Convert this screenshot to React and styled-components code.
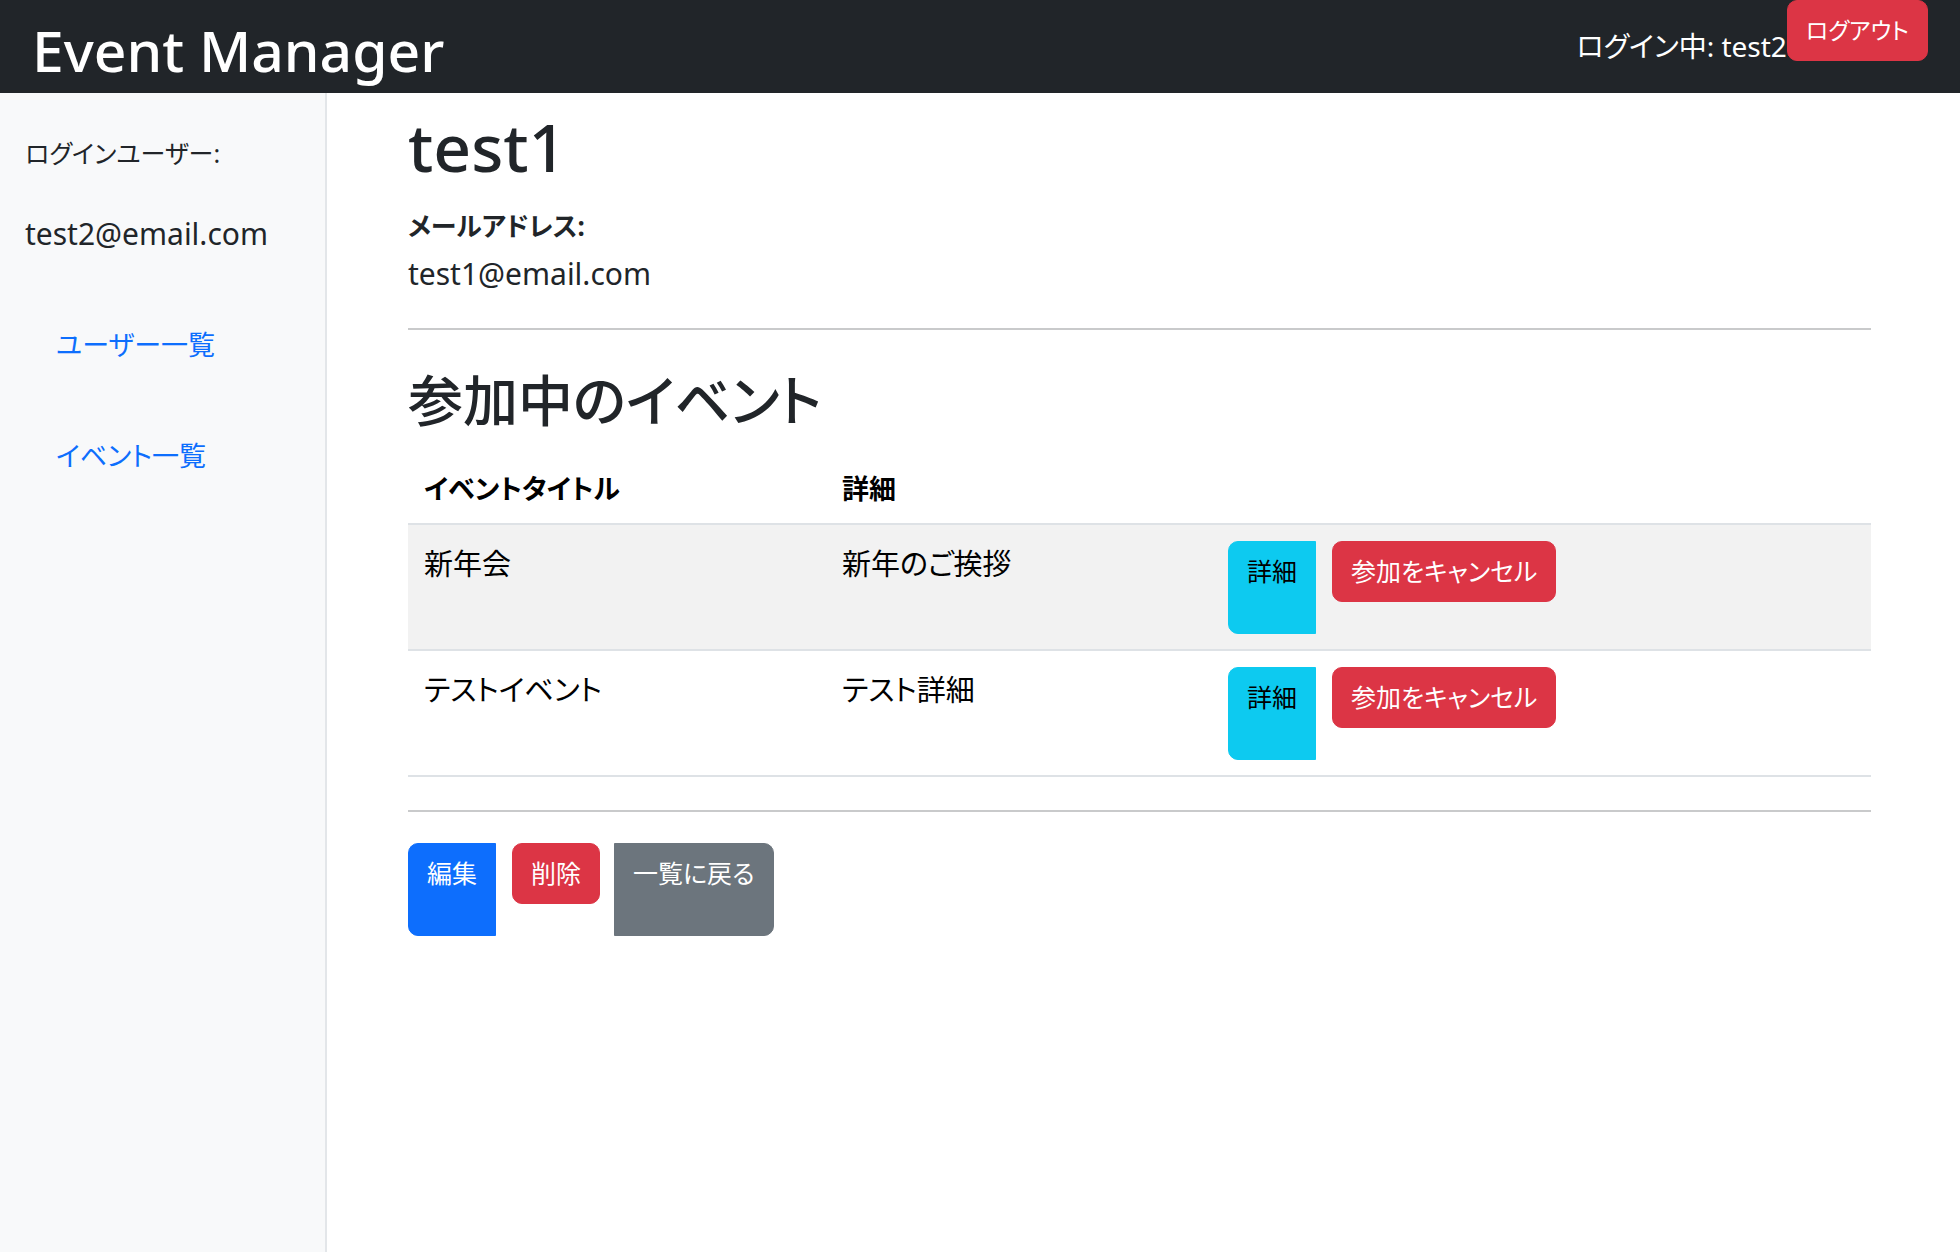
import React from 'react';
import styled, {createGlobalStyle, css} from 'styled-components';

const GlobalStyle = createGlobalStyle`
    html, body {
        margin: 0;
        padding: 0;
    }

    body {
        font-family: "Noto Sans", "Noto Sans CJK JP", sans-serif;
        font-feature-settings: "palt";
        color: #212529;
        background: #fff;
    }

    * {
        box-sizing: border-box;
    }
`

const Page = styled.div`
    min-height: 100vh;
    display: flex;
    flex-direction: column;
`

const Navbar = styled.header`
    height: 93px;
    flex-shrink: 0;
    display: flex;
    align-items: center;
    justify-content: space-between;
    padding: 0 32px 0 32px;
    background: #212529;
`

const Brand = styled.a`
    margin-top: 6px;
    color: #fff;
    font-size: 57px;
    font-weight: 500;
    line-height: 70px;
    text-decoration: none;
`

const UserBox = styled.div`
    display: flex;
    align-items: center;
`

const UserName = styled.span`
    color: #fff;
    font-size: 28px;
    line-height: 43px;
`

const InlineForm = styled.form`
    display: flex;
    margin: 0 ${p => p.$mr || 0}px 32px ${p => p.$ml || 0}px;
`

const btnBase = css`
    display: inline-block;
    padding: 10px 18px;
    border: 1px solid;
    border-radius: 10px;
    font-family: inherit;
    font-feature-settings: "palt";
    font-size: ${p => p.$size || 25}px;
    line-height: 39px;
    white-space: nowrap;
    text-decoration: none;
    cursor: pointer;
`

const variants = {
    danger: css`background: #dc3545; border-color: #dc3545; color: #fff;`,
    info: css`background: #0dcaf0; border-color: #0dcaf0; color: #000;`,
    primary: css`background: #0d6efd; border-color: #0d6efd; color: #fff;`,
    secondary: css`background: #6c757d; border-color: #6c757d; color: #fff;`,
}

const edges = {
    first: css`border-radius: 10px 0 0 10px;`,
    last: css`border-radius: 0 10px 10px 0;`,
}

const Button = styled.button`
    ${btnBase};
    ${p => variants[p.$variant || 'danger']};
`

const LinkButton = styled.a`
    ${btnBase};
    ${p => variants[p.$variant]};
    ${p => p.$edge && edges[p.$edge]};
`

const BtnGroup = styled.div`
    display: inline-flex;
    align-items: stretch;
`

const Body = styled.div`
    flex: 1;
    display: flex;
`

const Sidebar = styled.aside`
    width: 327px;
    flex-shrink: 0;
    padding: 41px 25px;
    background: #f8f9fa;
    border-right: 2px solid #e3e6e9;
`

const SideLabel = styled.p`
    margin: 0;
    font-size: 25px;
    line-height: 38px;
`

const SideEmail = styled.p`
    margin: 43px 0 0;
    font-size: 30px;
    line-height: 38px;
`

const NavList = styled.nav`
    display: flex;
    flex-direction: column;
    gap: 49px;
    margin-top: 61px;
`

const NavLink = styled.a`
    display: block;
    padding: 12px 31px;
    color: #0d6efd;
    font-size: 27px;
    line-height: 38px;
    text-decoration: none;
`

const Main = styled.main`
    flex: 1;
    padding: 0 89px 40px 81px;
`

const Title = styled.h1`
    margin: 14px 0 0;
    font-size: 66px;
    font-weight: 500;
    line-height: 79px;
`

const FieldLabel = styled.div`
    margin-top: 21px;
    font-size: 26px;
    font-weight: 700;
    line-height: 38px;
`

const FieldValue = styled.div`
    margin-top: 10px;
    font-size: 30px;
    line-height: 38px;
`

const Rule = styled.hr`
    margin: ${p => p.$top}px 0 0;
    border: 0;
    border-top: 2px solid #c9cacb;
`

const Heading = styled.h2`
    margin: 36px 0 0;
    font-size: 55px;
    font-weight: 500;
    line-height: 67px;
`

const Table = styled.table`
    width: 100%;
    margin-top: 21px;
    border-collapse: collapse;
    table-layout: fixed;
    color: #000;
`

const Th = styled.th`
    width: ${p => p.$w ? `${p.$w}px` : 'auto'};
    padding: 16px 16px 15px;
    border-bottom: 2px solid #dee2e6;
    font-size: 27px;
    font-weight: 700;
    line-height: 38px;
    text-align: left;
`

const Tr = styled.tr`
    background: ${p => p.$striped ? '#f2f2f2' : '#fff'};
`

const Td = styled.td`
    padding: 16px 16px 15px;
    border-bottom: 2px solid #dee2e6;
    font-size: 29px;
    line-height: 45px;
    vertical-align: top;
`

const Actions = styled.div`
    margin-top: 31px;
`

const events = [
    {id: 1, title: '新年会', detail: '新年のご挨拶'},
    {id: 2, title: 'テストイベント', detail: 'テスト詳細'},
]

const App = () => {
    return (
        <>
            <GlobalStyle/>
            <Page>
                <Navbar>
                    <Brand href="#">Event Manager</Brand>
                    <UserBox>
                        <UserName>ログイン中: test2</UserName>
                        <InlineForm onSubmit={e => e.preventDefault()}>
                            <Button type="submit" $size={23}>ログアウト</Button>
                        </InlineForm>
                    </UserBox>
                </Navbar>
                <Body>
                    <Sidebar>
                        <SideLabel>ログインユーザー:</SideLabel>
                        <SideEmail>test2@email.com</SideEmail>
                        <NavList>
                            <NavLink href="#">ユーザー一覧</NavLink>
                            <NavLink href="#">イベント一覧</NavLink>
                        </NavList>
                    </Sidebar>
                    <Main>
                        <Title>test1</Title>
                        <FieldLabel>メールアドレス:</FieldLabel>
                        <FieldValue>test1@email.com</FieldValue>
                        <Rule $top={35}/>
                        <Heading>参加中のイベント</Heading>
                        <Table>
                            <thead>
                            <tr>
                                <Th $w={418}>イベントタイトル</Th>
                                <Th $w={386}>詳細</Th>
                                <Th/>
                            </tr>
                            </thead>
                            <tbody>
                            {events.map((event, i) => (
                                <Tr key={event.id} $striped={i % 2 === 0}>
                                    <Td>{event.title}</Td>
                                    <Td>{event.detail}</Td>
                                    <Td>
                                        <BtnGroup>
                                            <LinkButton href="#" $variant="info" $edge="first">詳細</LinkButton>
                                            <InlineForm $ml={16} onSubmit={e => e.preventDefault()}>
                                                <Button type="submit">参加をキャンセル</Button>
                                            </InlineForm>
                                        </BtnGroup>
                                    </Td>
                                </Tr>
                            ))}
                            </tbody>
                        </Table>
                        <Rule $top={33}/>
                        <Actions>
                            <BtnGroup>
                                <LinkButton href="#" $variant="primary" $edge="first">編集</LinkButton>
                                <InlineForm $ml={16} $mr={14} onSubmit={e => e.preventDefault()}>
                                    <Button type="submit">削除</Button>
                                </InlineForm>
                                <LinkButton href="#" $variant="secondary" $edge="last">一覧に戻る</LinkButton>
                            </BtnGroup>
                        </Actions>
                    </Main>
                </Body>
            </Page>
        </>
    );
};

export default App;
